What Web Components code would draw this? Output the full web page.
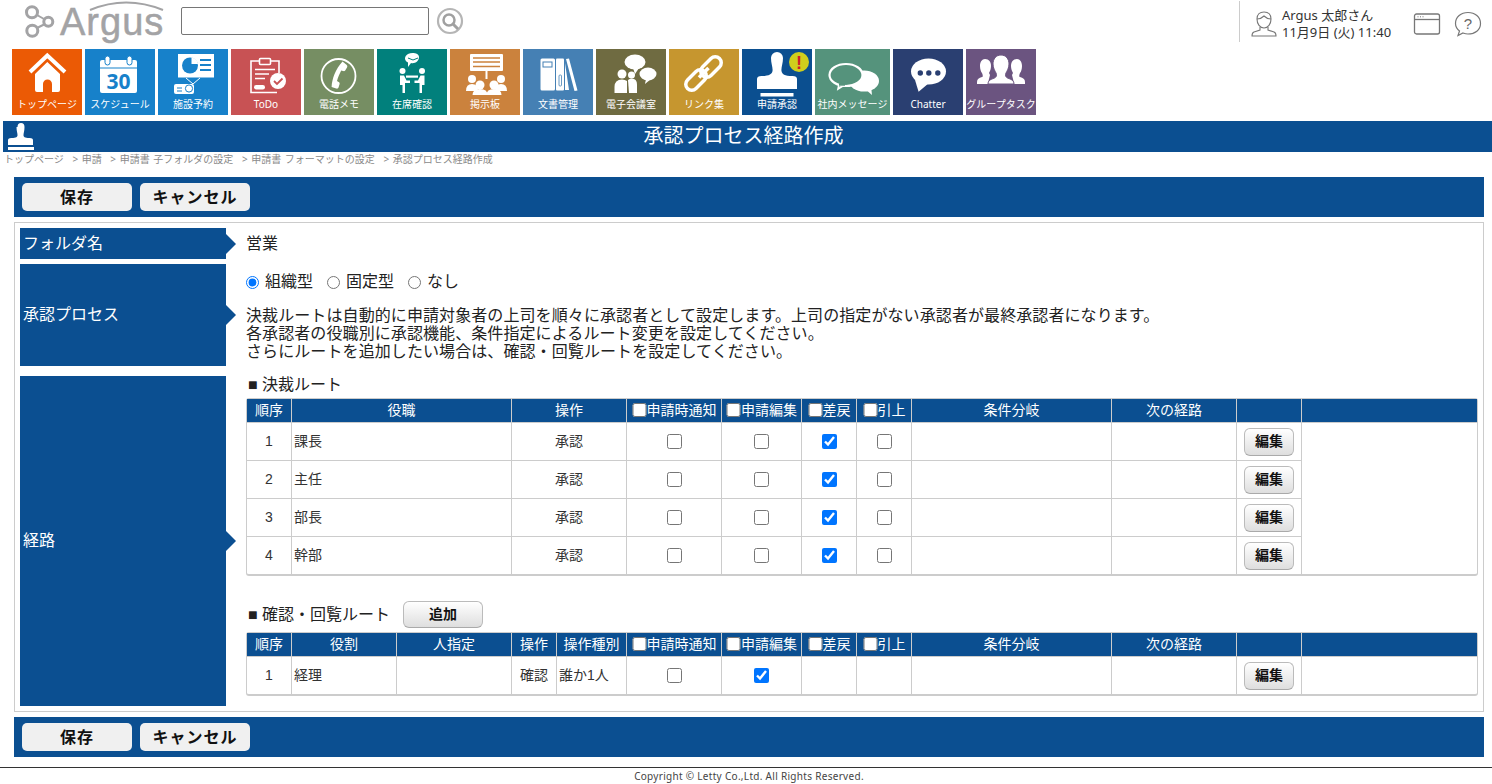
<!DOCTYPE html>
<html lang="ja"><head><meta charset="utf-8"><title>承認プロセス経路作成</title>
<style>
html,body{margin:0;padding:0;background:#fff}
body{font-family:"Noto Sans","Noto Sans CJK JP",sans-serif;color:#222;width:1492px;height:784px;overflow:hidden}
</style></head><body>
<app-header></app-header>
<app-nav>
<nav-tile label="トップページ" color="#eb5a05"><svg viewBox="0 0 70 48"><path d="M18 23 35.300 6.500 53 23" fill="none" stroke="#fff" stroke-width="4"/><path d="M35.300 13 48 25V41q0 2-2 2H40V35a4.500 4.500 0 0 0-9 0v8H25q-2 0-2-2V25z" fill="#fff"/></svg></nav-tile>
<nav-tile label="スケジュール" color="#1781ca"><svg viewBox="0 0 70 48"><rect x="15" y="11" width="37" height="33" rx="2" fill="#fff"/><rect x="15" y="18.500" width="37" height="1" fill="#1781ca"/><rect x="20" y="7" width="5" height="9" rx="2.500" fill="#fff" stroke="#1781ca"/><rect x="42" y="7" width="5" height="9" rx="2.500" fill="#fff" stroke="#1781ca"/><text x="33.500" y="40" text-anchor="middle" font-family="Open Sans,sans-serif" font-weight="700" font-size="21" fill="#1781ca">30</text></svg></nav-tile>
<nav-tile label="施設予約" color="#1781ca"><svg viewBox="0 0 70 48"><rect x="20" y="5" width="36" height="23.500" fill="#fff"/><circle cx="32" cy="16.500" r="8" fill="#1781ca"/><path d="M33.500 15V8.500a7.500 7.500 0 0 1 6.500 6.500z" fill="#fff"/><path d="M42 11h11M42 16h11M42 21h11" stroke="#1781ca" stroke-width="2"/><path d="M28 29l7 6 7-6" fill="none" stroke="#fff"/><rect x="16" y="35" width="20" height="10" rx="2" fill="#fff"/><circle cx="31" cy="39.500" r="3.600" fill="#fff" stroke="#1781ca"/><path d="M19 39h5M19 42h5" stroke="#1781ca"/></svg></nav-tile>
<nav-tile label="ToDo" color="#c85254"><svg viewBox="0 0 70 48"><path d="M28 12H20V43.500H46" fill="none" stroke="#fff" stroke-width="1.600"/><path d="M40 12h8V24" fill="none" stroke="#fff" stroke-width="1.600"/><rect x="28.500" y="9.500" width="11" height="6" rx="1" fill="none" stroke="#fff" stroke-width="1.600"/><path d="M24 20.500h20M24 25h14M24 29.500h10" stroke="#fff" stroke-width="1.600"/><rect x="23" y="36" width="11" height="4.500" rx="2.200" fill="#fff"/><circle cx="47" cy="32" r="8" fill="#fff"/><path d="M43 32l3 3 5.500-5.500" fill="none" stroke="#c85254" stroke-width="1.800"/></svg></nav-tile>
<nav-tile label="電話メモ" color="#768e63"><svg viewBox="0 0 70 48"><circle cx="34.500" cy="27" r="17" fill="none" stroke="#fff" stroke-width="1.800"/><path d="M38.500 12.500l4 3.200c1 .8 1 1.800.5 2.800l-1.800 3c-.5.8-1.300.9-2.200.6l-1.800-.6c-1.500 3-3.300 7-4.200 10.500l1.600.9c.8.4 1.200 1.100 1 2l-1 3.400c-.3 1.100-1.200 1.700-2.400 1.300l-4.600-1.700C28 30 31.500 20 38.500 12.500z" fill="#fff"/></svg></nav-tile>
<nav-tile label="在席確認" color="#01807c"><svg viewBox="0 0 70 48"><path d="M31 5c4-2 11-1 11 3s-4 7-8 6l-3 4v-4.500c-4-2-4-6 0-8.500z" fill="#fff"/><path d="M31 9l5 2 5-2" fill="none" stroke="#01807c"/><circle cx="25.500" cy="22" r="3" fill="#fff"/><circle cx="45" cy="22" r="3" fill="#fff"/><path d="M23 26.500h4l2.500 5H33v2.500h-5V44h-2.500V36h-2.500zM47.500 26.500h-4L41 31.500h-3.500V34h5V44H45V36h2.500z" fill="#fff"/><rect x="29" y="26.500" width="12" height="2.200" fill="#fff"/></svg></nav-tile>
<nav-tile label="掲示板" color="#cb823d"><svg viewBox="0 0 70 48"><rect x="20" y="5" width="33" height="17" rx="1" fill="#fff"/><path d="M23 9h27M23 13h27M23 17.500h27" stroke="#cb823d" stroke-width="1.400"/><rect x="35.500" y="22" width="2" height="8" fill="#fff"/><g fill="#fff"><circle cx="22" cy="30" r="4"/><path d="M16 42q0-7 6-7t6 7z"/><circle cx="51" cy="30" r="4"/><path d="M45 42q0-7 6-7t6 7z"/><circle cx="30" cy="36" r="4.500"/><path d="M22.500 46q0-6 7.500-6t7.500 6z"/><circle cx="44" cy="36" r="4.500"/><path d="M36.500 46q0-6 7.500-6t7.500 6z"/></g></svg></nav-tile>
<nav-tile label="文書管理" color="#4580b4"><svg viewBox="0 0 70 48"><rect x="17.500" y="9.500" width="14.500" height="32" rx="1.500" fill="#fff"/><rect x="20" y="13" width="9" height="5" fill="none" stroke="#4580b4"/><rect x="33" y="9.500" width="8" height="32" rx="1" fill="#fff"/><rect x="36" y="26" width="2.500" height="11" rx="1" fill="none" stroke="#4580b4" stroke-width=".8"/><path d="M43 10l3-.5 8.500 32-3 .5zM42 14v27h4z" fill="#fff"/></svg></nav-tile>
<nav-tile label="電子会議室" color="#6f6b41"><svg viewBox="0 0 70 48"><ellipse cx="39" cy="13" rx="10.500" ry="7.500" fill="#fff"/><path d="M37 19l2 6 4-6z" fill="#fff"/><ellipse cx="52" cy="25" rx="8.500" ry="6.500" fill="#fff"/><path d="M50 30l-1 5 6-5z" fill="#fff"/><circle cx="26" cy="25" r="4.500" fill="#fff"/><circle cx="35.500" cy="26" r="3.500" fill="#fff"/><path d="M18.500 44V38q0-7.500 7.500-7.500 3 0 5 1.500V44z" fill="#fff"/><path d="M32 31q1.500-1.500 3.500-1.500 5.500 0 5.500 6V44h-8z" fill="#fff"/></svg></nav-tile>
<nav-tile label="リンク集" color="#c6962f"><svg viewBox="0 0 70 48"><g fill="none" stroke="#fff" stroke-width="3.500"><rect x="36" y="6" width="12" height="24" rx="6" transform="rotate(45 42 18)"/><rect x="21" y="19" width="12" height="24" rx="6" transform="rotate(45 27 31)"/></g><path d="M30 28.500 39.500 19" stroke="#fff" stroke-width="3.500"/></svg></nav-tile>
<nav-tile label="申請承認" color="#0b4f90"><svg viewBox="0 0 70 48"><path d="M29 9a6 6 0 0 1 12 0c0 6-2 9-1.500 13 .4 3 3 5 11 5 3 0 4.500 1 4.500 3v10H15V30c0-2 1.500-3 4.500-3 8 0 10.600-2 11-5 .5-4-1.500-7-1.500-13z" fill="#fff"/><rect x="18.500" y="44" width="33" height="3.500" fill="#fff"/><circle cx="57" cy="13" r="10" fill="#d0cf1d"/><text x="57" y="19.500" text-anchor="middle" font-family="Liberation Sans,sans-serif" font-weight="700" font-size="18" fill="#d0202a">!</text></svg></nav-tile>
<nav-tile label="社内メッセージ" color="#55937c" w="75"><svg viewBox="0 0 75 48"><ellipse cx="49" cy="32" rx="15" ry="10.500" fill="#fff"/><path d="M50 40l7 6-1-9z" fill="#fff"/><path d="M24 35l-1 5 8-5" fill="#55937c" stroke="#fff" stroke-width="1.600"/><ellipse cx="31" cy="26" rx="16.500" ry="11" fill="#55937c" stroke="#fff" stroke-width="2.200"/><path d="M24 35.500l6 0" stroke="#55937c" stroke-width="2.400"/></svg></nav-tile>
<nav-tile label="Chatter" color="#2a3f71"><svg viewBox="0 0 70 48"><ellipse cx="35.500" cy="22.500" rx="17.500" ry="13" fill="#fff"/><path d="M22 31l3.600 11.700L36 34z" fill="#fff"/><circle cx="27.300" cy="24" r="2.700" fill="#2a3f71"/><circle cx="35.800" cy="24" r="2.700" fill="#2a3f71"/><circle cx="44.800" cy="24" r="2.700" fill="#2a3f71"/></svg></nav-tile>
<nav-tile label="グループタスク" color="#6b5480"><svg viewBox="0 0 70 48"><g fill="#fff"><path d="M19 10c4 0 6 3 6 7 0 3-1 5-2 7l1 2-2 8 0 1H11v-2c0-3 2-4 5-5 1 0 1-2 0-4-1-1-2-4-2-7 0-4 2-7 5-7zM51 10c-4 0-6 3-6 7 0 3 1 5 2 7l-1 2 2 8v1h11v-2c0-3-2-4-5-5-1 0-1-2 0-4 1-1 2-4 2-7 0-4-2-7-5-7z"/><path d="M35 6c5 0 8 4 8 9 0 4-2 7-3 9-1 2-.5 4 1.500 5 4 1.500 6.500 2.500 6.500 6H22c0-3.500 2.500-4.500 6.500-6 2-1 2.500-3 1.500-5-1-2-3-5-3-9 0-5 3-9 8-9z" stroke="#6b5480"/></g></svg></nav-tile>
</app-nav>
<title-bar>承認プロセス経路作成</title-bar>
<bread-crumb></bread-crumb>
<action-bar></action-bar>
<form-panel>
<form-row label="フォルダ名" h="31"><div style="font-size:16px;height:31px;line-height:31px">営業</div></form-row>
<form-row label="承認プロセス" h="102" gap="5"><process-info></process-info></form-row>
<form-row label="経路" h="330" gap="10"><route-section></route-section></form-row>
</form-panel>
<action-bar style="margin-top:5px"></action-bar>
<app-footer></app-footer>
<script>
const FONT='"Noto Sans","Noto Sans CJK JP",sans-serif';
const TIGHT='"Liberation Sans","Noto Sans CJK JP",sans-serif';
function el(name,cls){customElements.define(name,cls)}
function shadow(host,html){host.attachShadow({mode:'open'}).innerHTML=html}

el('app-header',class extends HTMLElement{connectedCallback(){shadow(this,`<style>
:host{display:flex;height:49px;box-sizing:border-box;align-items:flex-start;font-family:${FONT}}
.logo{display:block;width:145px;height:47px;margin:0 0 0 22px;flex:none}
.q{width:248px;height:28px;box-sizing:border-box;border:1px solid #767676;border-radius:2px;margin:7px 0 0 14px;background:#fff;flex:none;padding:0}
.s{width:28px;height:28px;margin:7px 0 0 7px;flex:none}
.sp{flex:1}
.u{display:flex;height:41px;margin:1px 10px 0 0;border-left:1px solid #ccc}
.ui{width:26px;height:27px;margin:9px 0 0 11px}
.t{margin:6px 0 0 5px;font-size:13px;line-height:17px;color:#333;width:131px;white-space:nowrap}
.w{width:28px;height:24px;margin:11px 0 0 0}
.h{width:28px;height:26px;margin:10px 0 0 13px}
</style>
<svg class="logo" viewBox="0 0 145 47"><g fill="none" stroke="#a3a3a5" stroke-width="3"><circle cx="10" cy="12.300" r="5.500"/><circle cx="26.300" cy="21.700" r="4.500"/><circle cx="10.300" cy="30.700" r="5.500"/></g><path d="M15 15l7 4M15 28l7-3.500" stroke="#a3a3a5" stroke-width="2"/>
<text x="38" y="35" font-family="Liberation Sans,sans-serif" font-size="38" fill="#a3a3a5" stroke="#a3a3a5" stroke-width=".5" letter-spacing="1">Argus</text>
<path d="M68 10Q104 -5 141 10" fill="none" stroke="#a3a3a5" stroke-width="2"/></svg>
<input class="q" type="text" aria-label="search">
<svg class="s" viewBox="0 0 28 28"><circle cx="14" cy="14" r="12" fill="#fff" stroke="#b5b5b5" stroke-width="2.200"/><circle cx="13" cy="13" r="5.500" fill="none" stroke="#a0a0a0" stroke-width="2.500"/><path d="M17 17l5 5" stroke="#a0a0a0" stroke-width="3"/></svg>
<div class="sp"></div>
<div class="u"><svg class="ui" viewBox="0 0 26 27" fill="none" stroke="#777" stroke-width="1.100"><path d="M6 9c0-5 3-7 7-7s7 2 7 7-3 9-7 9-7-4-7-9z"/><path d="M6 9c3 0 5-1 7-3 2 2 4 3 7 3"/><path d="M9 17v3l-6 2c-1.500.5-2 2-2 4h24c0-2-.5-3.500-2-4l-6-2v-3"/></svg>
<div class="t">Argus 太郎さん<br>11月9日 (火) 11:40</div>
<svg class="w" viewBox="0 0 28 24" fill="none" stroke="#777" stroke-width="1.300"><rect x="1.500" y="2" width="25" height="20" rx="2"/><path d="M1.500 7.500h25"/><path d="M4.500 4.800h1M7 4.800h1M9.500 4.800h1" stroke-width="1"/></svg>
<svg class="h" viewBox="0 0 28 26" fill="none" stroke="#777" stroke-width="1.200"><path d="M14 1.500c7 0 12.500 4.500 12.500 11S21 23 14 23c-2 0-3-.3-5-1l-5 2.500 1.500-4.500C3 18 1.500 15.500 1.500 12.500 1.500 6 7 1.500 14 1.500z"/><text x="14" y="18" text-anchor="middle" font-size="15" fill="#666" stroke="none" font-family="Liberation Sans,sans-serif">?</text></svg>
</div>`)}});

el('app-nav',class extends HTMLElement{connectedCallback(){shadow(this,`<style>:host{display:flex;gap:3px;padding-left:12px;height:66px}</style><slot></slot>`)}});

el('nav-tile',class extends HTMLElement{connectedCallback(){const w=this.getAttribute('w')||70;shadow(this,`<style>
:host{display:flex;flex-direction:column;width:${w}px;height:66px;flex:none;background:${this.getAttribute('color')};font-family:${FONT};color:#fff;overflow:hidden}
.i{height:48px;flex:none}
::slotted(svg){display:block;width:${w}px;height:48px}
.l{font-size:10px;line-height:14px;margin-top:0;text-align:center;white-space:nowrap;display:flex;justify-content:center}
</style><div class="i"><slot></slot></div><div class="l">${this.getAttribute('label')}</div>`)}});

el('title-bar',class extends HTMLElement{connectedCallback(){shadow(this,`<style>
:host{display:block;position:relative;margin:6px 0 0 3px;height:31px;padding-right:8px;background:#0b4f91;color:#fff;font:20px/31px ${TIGHT};text-align:center}
svg{position:absolute;left:4px;top:2px;width:28px;height:28px}
</style><svg viewBox="0 0 28 28" fill="#fff"><path d="M10.500 4a3.500 4 0 0 1 7 0c0 4-1 6-1 8 0 2 1 3 6 3 3 0 3.500 1 3.500 2.500V22H1v-4.500C1 16 1.500 15 4.500 15c5 0 6-1 6-3 0-2-1-4-1-8z"/><rect x="1" y="24" width="26" height="3"/></svg><slot></slot>`)}});

el('bread-crumb',class extends HTMLElement{connectedCallback(){shadow(this,`<style>
:host{display:block;height:25px;font:10px/14px ${FONT};color:#8a8a8a;padding-left:4px;white-space:pre;box-sizing:border-box;word-spacing:1px}
span{margin-right:5px}
</style><span>トップページ</span> <span>&gt; 申請</span> <span>&gt; 申請書 子フォルダの設定</span> <span>&gt; 申請書 フォーマットの設定</span> <span>&gt; 承認プロセス経路作成</span>`)}});

el('flat-button',class extends HTMLElement{connectedCallback(){shadow(this,`<style>
:host{display:flex;align-items:center;justify-content:center;width:110px;height:28px;background:#f0f0f0;border-radius:5px;font:700 16px/28px ${FONT};color:#111;letter-spacing:1px}
</style><slot></slot>`)}});

el('action-bar',class extends HTMLElement{connectedCallback(){shadow(this,`<style>
:host{display:flex;gap:8px;align-items:center;margin:0 8px 0 14px;height:40px;background:#0b4f91;padding-left:8px}
</style><flat-button>保存</flat-button><flat-button>キャンセル</flat-button>`)}});

el('form-panel',class extends HTMLElement{connectedCallback(){shadow(this,`<style>
:host{display:block;margin:5px 8px 0 14px;border:1px solid #ccc;padding:5px;height:490px;box-sizing:border-box;font-family:${TIGHT}}
</style><slot></slot>`)}});

el('form-row',class extends HTMLElement{connectedCallback(){const h=this.getAttribute('h'),g=this.getAttribute('gap')||0;shadow(this,`<style>
:host{display:flex;height:${h}px;margin-top:${g}px}
.l{position:relative;flex:none;width:206px;height:100%;background:#0b4f91;color:#fff;font-size:16px;display:flex;align-items:center;padding:0 0 4px 3px;box-sizing:border-box;margin-right:20px}
.l::after{content:"";position:absolute;left:100%;top:50%;margin-top:-10px;border-left:10px solid #0b4f91;border-top:10px solid transparent;border-bottom:10px solid transparent}
.c{flex:1;min-width:0}
</style><div class="l">${this.getAttribute('label')}</div><div class="c"><slot></slot></div>`)}});

el('process-info',class extends HTMLElement{connectedCallback(){shadow(this,`<style>
:host{display:block;font:16px/18px ${TIGHT};color:#222}
.r{display:flex;align-items:center;height:36px;margin-bottom:7px}
label{display:flex;align-items:center;margin-right:14px}
input{margin:0 6px 0 0;width:13px;height:13px}
p{margin:0;letter-spacing:.09px;white-space:nowrap}
</style><div class="r"><label><input type="radio" name="p" checked>組織型</label><label><input type="radio" name="p">固定型</label><label><input type="radio" name="p">なし</label></div>
<p>決裁ルートは自動的に申請対象者の上司を順々に承認者として設定します。上司の指定がない承認者が最終承認者になります。<br>各承認者の役職別に承認機能、条件指定によるルート変更を設定してください。<br>さらにルートを追加したい場合は、確認・回覧ルートを設定してください。</p>`)}});

el('edit-button',class extends HTMLElement{connectedCallback(){shadow(this,`<style>
:host{display:inline-flex;align-items:center;justify-content:center;box-sizing:border-box;width:50px;height:28px;padding-bottom:2px;border:1px solid #bbb;border-bottom-color:#aaa;border-radius:6px;background:linear-gradient(#fff,#dedede);font:700 14px/1 ${TIGHT};color:#111;vertical-align:middle}
</style><slot></slot>`)}});

el('route-table',class extends HTMLElement{
connectedCallback(){
 const {cols,rows,head}=this.data;
 const cell=v=>{
  if(v===0)return '<td class="c"><input type="checkbox"></td>';
  if(v===1)return '<td class="c"><input type="checkbox" checked></td>';
  if(v==='E')return '<td class="c"><edit-button>編集</edit-button></td>';
  if(v&&v.c)return `<td class="c x">${v.c}</td>`;
  return `<td class="x">${v||''}</td>`};
 shadow(this,`<style>
:host{display:block;border:1px solid #ccc;border-bottom-width:2px;border-radius:3px;font:14px/1 ${TIGHT};color:#333;box-sizing:border-box;width:1232px}
table{border-collapse:separate;border-spacing:0;table-layout:fixed;width:1230px}
th{height:24px;box-sizing:border-box;background:#0b4f91;color:#fff;font-weight:400;padding:0 0 2px;border-right:1px solid #ccc;border-bottom:1px solid #ccc;white-space:nowrap;text-align:center}
th:last-child{border-right:0}
th input{margin:0;width:15px;height:14px;vertical-align:-2px}
td{height:38px;box-sizing:border-box;padding:0 0 0 2px;border-right:1px solid #ccc;border-bottom:1px solid #ccc;white-space:nowrap}
tr:last-child td{border-bottom:0;height:37px}
td:last-child{border:0}
td.c{text-align:center;padding:0}
td.x{padding-bottom:2px}
td input{margin:0;width:15px;height:15px;vertical-align:middle}
</style><table><colgroup>${cols.map(w=>`<col style="width:${w}px">`).join('')}</colgroup>
<thead><tr>${head.map(h=>`<th>${h.startsWith('#')?'<input type="checkbox">'+h.slice(1):h}</th>`).join('')}</tr></thead>
<tbody>${rows.map(r=>`<tr>${r.map(cell).join('')}<td></td></tr>`).join('')}</tbody></table>`)}
});

el('route-section',class extends HTMLElement{connectedCallback(){
 const n=(i,nm)=>[{c:String(i)},nm,{c:'承認'},0,0,1,0,'','','E'];
 shadow(this,`<style>
:host{display:block;font:16px/1 ${TIGHT};color:#222}
.h1{height:22px;line-height:17px;padding-left:2px}
.h2{display:flex;align-items:center;height:27px;margin:25px 0 4px;padding-left:2px}
i{display:inline-block;width:14px;font-style:normal}
edit-button{width:80px;height:27px;margin-left:13px}
</style><div class="h1"><i>■</i>決裁ルート</div>
<div id="a"></div>
<div class="h2"><i>■</i>確認・回覧ルート<edit-button>追加</edit-button></div>
<div id="b"></div>`);
 const mk=(id,data)=>{const t=document.createElement('route-table');t.data=data;this.shadowRoot.getElementById(id).replaceWith(t)};
 mk('a',{cols:[45,220,115,95,80,55,55,200,125,65,175],
  head:['順序','役職','操作','#申請時通知','#申請編集','#差戻','#引上','条件分岐','次の経路','',''],
  rows:[n(1,'課長'),n(2,'主任'),n(3,'部長'),n(4,'幹部')]});
 mk('b',{cols:[45,105,115,45,70,95,80,55,55,200,125,65,175],
  head:['順序','役割','人指定','操作','操作種別','#申請時通知','#申請編集','#差戻','#引上','条件分岐','次の経路','',''],
  rows:[[{c:'1'},'経理','',{c:'確認'},'誰か1人',0,1,'','','','','E']]});
}});

el('app-footer',class extends HTMLElement{connectedCallback(){shadow(this,`<style>
:host{display:block;margin-top:10px;border-top:1px solid #333;font:10px/15px ${FONT};color:#444;text-align:center;letter-spacing:.3px;padding:1px 0 0 6px}
</style>Copyright © Letty Co.,Ltd. All Rights Reserved.`)}});
</script>
</body></html>
